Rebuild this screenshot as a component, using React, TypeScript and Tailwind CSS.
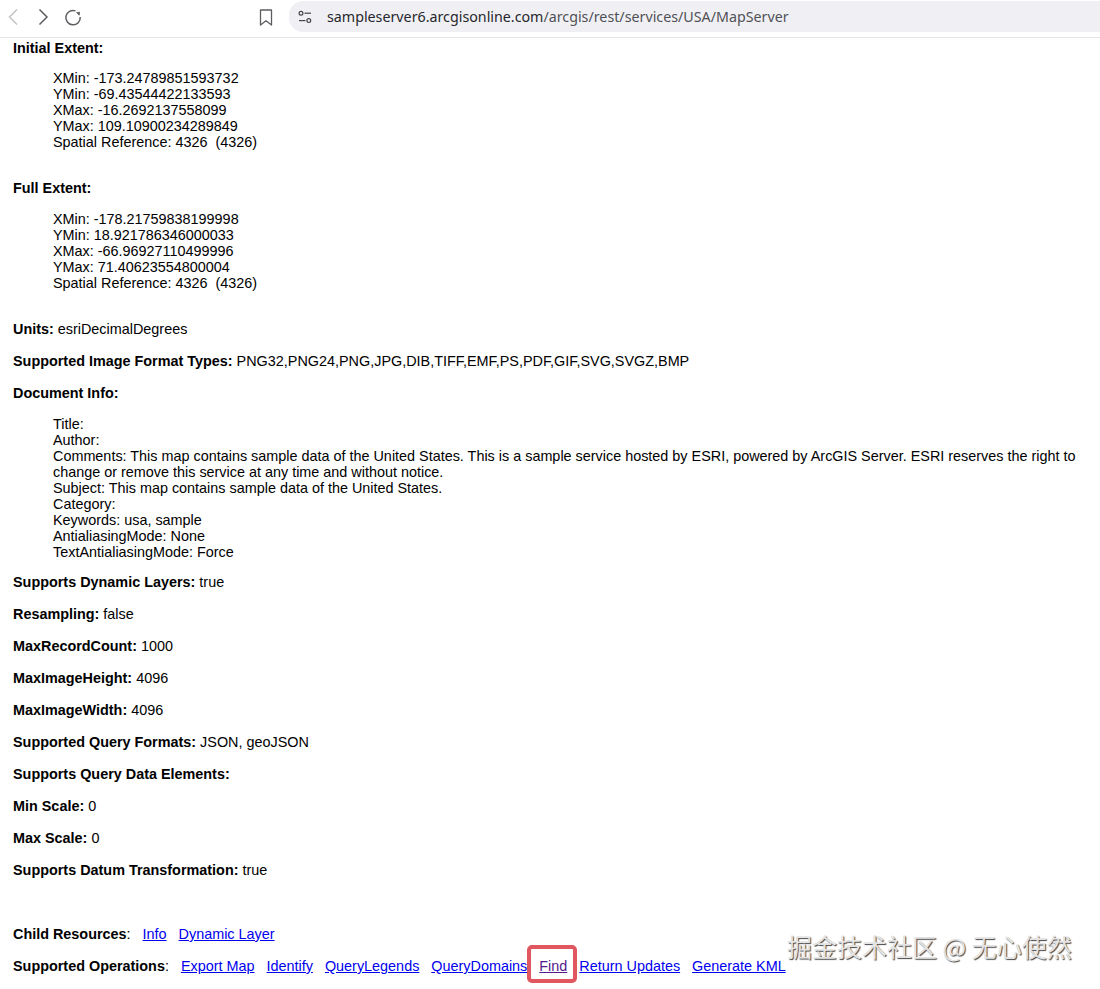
import React from "react";

const Row = ({ label, value }: { label: string; value?: string }) => (
  <p className="mb-4 h-4">
    <b>{label}:</b>
    {value ? ` ${value}` : ""}
  </p>
);

const Block = ({ lines, className }: { lines: string[]; className: string }) => (
  <div className={`whitespace-pre-wrap pl-10 ${className}`}>
    {lines.map((l) => (
      <div key={l}>{l}</div>
    ))}
  </div>
);

const A = ({ children, className = "" }: { children: React.ReactNode; className?: string }) => (
  <a href="#" className={`text-[#0000ee] underline ${className}`}>
    {children}
  </a>
);

export default function App() {
  return (
    <div className="relative h-[989px] w-[1100px] overflow-hidden bg-white text-[14.4px] leading-4 text-black font-['Liberation_Sans',Arial,sans-serif]">
      <header className="flex h-[38px] items-start border-b border-[#e4e4e6] bg-white">
        <div className="flex items-start pt-[6px] pl-[4px] text-[#5d5e62]">
          <svg width="18" height="22" viewBox="0 0 18 22" fill="none" stroke="#c2c3c6" strokeWidth="1.5" className="mr-[12px]">
            <path d="M13 3.5 L5.5 11 L13 18.5" />
          </svg>
          <svg width="18" height="22" viewBox="0 0 18 22" fill="none" stroke="currentColor" strokeWidth="1.5" className="mr-[11px]">
            <path d="M5.5 3.5 L13 11 L5.5 18.5" />
          </svg>
          <svg width="20" height="20" viewBox="0 0 20 20" fill="none" stroke="currentColor" strokeWidth="1.5" className="mt-[1px]">
            <path d="M12.5 3.9 A7.2 7.2 0 1 0 17.2 10" />
            <path d="M13.6 5.6 L16.6 5.2 L16.2 8.2 Z" fill="currentColor" strokeWidth="0.8" />
          </svg>
        </div>
        <div className="ml-[176px] pt-[9px]">
          <svg width="14" height="17" viewBox="0 0 14 17" fill="none" stroke="#5d5e62" strokeWidth="1.3">
            <path d="M1.5 1 H12.5 V16 L7 11.8 L1.5 16 Z" strokeLinejoin="round" />
          </svg>
        </div>
        <div className="ml-4 mt-[1px] flex h-[31px] flex-1 items-center rounded-l-[14px] bg-[#f0f0f4] pl-[9px] font-['Noto_Sans',sans-serif] text-[14.25px] text-[#505156]">
          <svg width="14" height="14" viewBox="0 0 14 14" fill="none" stroke="#44454a" strokeWidth="1.2" className="mr-[15px]">
            <circle cx="3" cy="3.2" r="1.9" />
            <path d="M6.5 3.2 H13" />
            <circle cx="10.8" cy="10.6" r="1.9" />
            <path d="M1 10.6 H7.5" />
          </svg>
          <span className="text-[#26272b]">sampleserver6.arcgisonline.com</span>
          <span>/arcgis/rest/services/USA/MapServer</span>
        </div>
      </header>

      <main className="pl-[13px] pt-[2px]">
        <p className="mb-[14px] h-4 font-bold">Initial Extent:</p>
        <Block
          className="mb-[30px]"
          lines={[
            "XMin: -173.24789851593732",
            "YMin: -69.43544422133593",
            "XMax: -16.2692137558099",
            "YMax: 109.10900234289849",
            "Spatial Reference: 4326  (4326)",
          ]}
        />
        <p className="mb-[15px] h-4 font-bold">Full Extent:</p>
        <Block
          className="mb-[30px]"
          lines={[
            "XMin: -178.21759838199998",
            "YMin: 18.921786346000033",
            "XMax: -66.96927110499996",
            "YMax: 71.40623554800004",
            "Spatial Reference: 4326  (4326)",
          ]}
        />
        <Row label="Units" value="esriDecimalDegrees" />
        <Row label="Supported Image Format Types" value="PNG32,PNG24,PNG,JPG,DIB,TIFF,EMF,PS,PDF,GIF,SVG,SVGZ,BMP" />
        <p className="mb-[15px] h-4 font-bold">Document Info:</p>
        <Block
          className="mb-[14px]"
          lines={[
            "Title:",
            "Author:",
            "Comments: This map contains sample data of the United States. This is a sample service hosted by ESRI, powered by ArcGIS Server. ESRI reserves the right to change or remove this service at any time and without notice.",
            "Subject: This map contains sample data of the United States.",
            "Category:",
            "Keywords: usa, sample",
            "AntialiasingMode: None",
            "TextAntialiasingMode: Force",
          ]}
        />
        <Row label="Supports Dynamic Layers" value="true" />
        <Row label="Resampling" value="false" />
        <Row label="MaxRecordCount" value="1000" />
        <Row label="MaxImageHeight" value="4096" />
        <Row label="MaxImageWidth" value="4096" />
        <Row label="Supported Query Formats" value="JSON, geoJSON" />
        <Row label="Supports Query Data Elements" />
        <Row label="Min Scale" value="0" />
        <Row label="Max Scale" value="0" />
        <Row label="Supports Datum Transformation" value="true" />
        <p className="mb-4 mt-12 h-4">
          <b>Child Resources</b>:
          <A className="ml-3">Info</A>
          <A className="ml-3">Dynamic Layer</A>
        </p>
        <p className="h-4 whitespace-nowrap">
          <b>Supported Operations</b>:
          <A className="ml-3">Export Map</A>
          <A className="ml-3">Identify</A>
          <A className="ml-3">QueryLegends</A>
          <A className="ml-3">QueryDomains</A>
          <span className="relative ml-3">
            <a href="#" className="text-[#551a8b] underline">Find</a>
            <span className="absolute left-[-12px] top-[-13px] h-[38px] w-[50px] rounded-[5px] border-4 border-[#e0575f]" />
          </span>
          <A className="ml-3">Return Updates</A>
          <A className="ml-3">Generate KML</A>
        </p>
      </main>

      <span className="absolute left-[787px] top-[930px] text-[25px] leading-8 text-[#e4e4e4] [text-shadow:1px_1px_1px_#444] font-['Noto_Sans_CJK_SC','Noto_Sans',sans-serif]">
        掘金技术社区 @ 无心使然
      </span>
    </div>
  );
}
